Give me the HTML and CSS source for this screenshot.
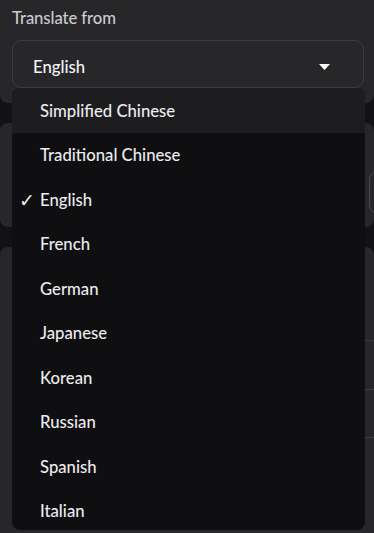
FILE: index.html
```html
<!DOCTYPE html>
<html lang="en">
<head>
<meta charset="utf-8">
<title>Translate from</title>
<link rel="stylesheet" href="styles.css">
</head>
<body>
<div class="page">
  <section class="panel">
    <div class="label">Translate from</div>
    <div class="select">
      <span class="select-value">English</span>
      <svg class="caret" width="11" height="6" viewBox="0 0 11 6"><path d="M0 0 H11 L5.5 6 Z" fill="#ffffff"/></svg>
    </div>
  </section>

  <section class="card card-input">
    <div class="cursor"></div>
    <div class="input-row">
      <div class="area"></div>
      <div class="btn"></div>
    </div>
  </section>

  <section class="card card-list">
    <div class="marks">
      <span class="mark-light"></span>
      <span class="mark-dark"></span>
    </div>
    <div class="rows">
      <div class="row"></div>
      <div class="row"></div>
      <div class="row"></div>
    </div>
  </section>

  <ul class="menu">
    <li class="item active"><span class="check"></span><span>Simplified Chinese</span></li>
    <li class="item"><span class="check"></span><span>Traditional Chinese</span></li>
    <li class="item"><span class="check">✓</span><span>English</span></li>
    <li class="item"><span class="check"></span><span>French</span></li>
    <li class="item"><span class="check"></span><span>German</span></li>
    <li class="item"><span class="check"></span><span>Japanese</span></li>
    <li class="item"><span class="check"></span><span>Korean</span></li>
    <li class="item"><span class="check"></span><span>Russian</span></li>
    <li class="item"><span class="check"></span><span>Spanish</span></li>
    <li class="item"><span class="check"></span><span>Italian</span></li>
  </ul>
</div>
</body>
</html>
```
FILE: styles.css
```css
* { box-sizing: border-box; }

html, body {
  margin: 0;
  padding: 0;
  background: #121214;
  overflow: hidden;
}

body {
  width: 374px;
  height: 533px;
  font-family: "Lato", "Noto Sans", sans-serif;
  font-size: 16.7px;
  font-weight: 500;
  color: #e9e9eb;
}

.page {
  position: relative;
  display: flex;
  flex-direction: column;
  gap: 20px;
  height: 533px;
}

.panel {
  background: #27272a;
  height: 103px;
  border-radius: 0 0 8px 8px;
  padding: 7px 10px 0 12px;
}

.label {
  color: #cbcbcf;
  font-weight: 500;
  line-height: 22px;
  height: 22px;
  letter-spacing: -0.1px;
}

.select {
  margin-top: 11px;
  height: 48px;
  border: 1px solid #3c3c40;
  border-radius: 9px;
  display: flex;
  align-items: center;
  justify-content: space-between;
  padding: 5px 33px 0 20px;
}

.select-value {
  color: #f4f4f6;
  line-height: 20px;
}

.caret { display: block; }

.card {
  background: #27272a;
  border-radius: 8px;
  overflow: hidden;
}

.card-input {
  height: 104px;
  padding: 7px 0 0 12px;
}

.cursor {
  width: 1px;
  height: 23px;
  background: #2323c8;
}

.input-row {
  margin-top: 19px;
  display: grid;
  grid-template-columns: 357px 80px;
  height: 41px;
}

.btn {
  border: 1px solid #4a4a4e;
  border-radius: 7px;
}

.card-list {
  flex: 1;
  border-radius: 8px 8px 0 0;
  padding-top: 23px;
}

.marks {
  display: flex;
  flex-direction: column;
  padding-left: 12px;
  height: 70px;
}

.mark-light {
  width: 2px;
  height: 7px;
  background: #3d8fe0;
}

.mark-dark {
  margin-top: 13px;
  width: 2px;
  height: 23px;
  background: #2424b8;
}

.rows {
  margin-left: 12px;
  border-left: 1px solid #333336;
}

.row {
  height: 48.5px;
  border-top: 1px solid #3c3c40;
}

.menu {
  position: absolute;
  top: 88px;
  left: 12px;
  width: 353px;
  height: 442px;
  margin: 0;
  padding: 0;
  list-style: none;
  background: #0f0f11;
  border-radius: 8px;
  overflow: hidden;
}

.item {
  height: 44.5px;
  display: grid;
  grid-template-columns: 23px 1fr;
  column-gap: 5px;
  align-items: center;
  color: #ececee;
  line-height: 20px;
  padding-top: 1px;
}

.item.active { background: #1d1d20; }

.check {
  justify-self: end;
  font-family: "DejaVu Sans", sans-serif;
  font-weight: 700;
  font-size: 19px;
  line-height: 20px;
}
```
